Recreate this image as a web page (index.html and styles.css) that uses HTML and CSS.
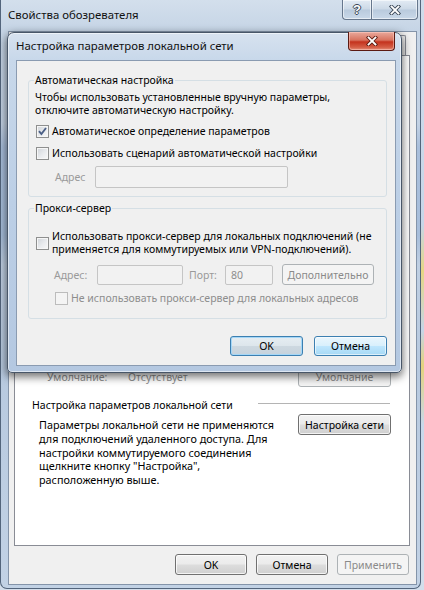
FILE: index.html
```html
<!DOCTYPE html>
<html lang="ru">
<head>
<meta charset="utf-8">
<title>Свойства обозревателя</title>
<link rel="stylesheet" href="styles.css">
</head>
<body>
<div class="main">
  <div class="titlebar">
    <span class="title">Свойства обозревателя</span>
    <div class="capbtns">
      <span class="cb help">?</span>
      <span class="cb close"><svg width="12" height="10" viewBox="0 0 12 10"><path d="M2.5 1.5 L9.5 8.5 M9.5 1.5 L2.5 8.5" stroke="#3a4656" stroke-width="3.6" stroke-linecap="square"/><path d="M2.5 1.5 L9.5 8.5 M9.5 1.5 L2.5 8.5" stroke="#fff" stroke-width="1.8" stroke-linecap="square"/></svg></span>
    </div>
  </div>
  <div class="client">
    <div class="tabs">
      <span class="tab"></span>
      <span class="tab"></span>
      <span class="tab"></span>
      <span class="tab"></span>
      <span class="tab"></span>
    </div>
    <div class="panel">
      <div class="default-row">
        <span class="k">Умолчание:</span>
        <span class="v">Отсутствует</span>
        <span class="btn dis wide">Умолчание</span>
      </div>
      <div class="sect-head">
        <span>Настройка параметров локальной сети</span>
        <span class="rule"></span>
      </div>
      <div class="lan-row">
        <p class="lan-text">Параметры локальной сети не применяются<br>для подключений удаленного доступа. Для<br>настройки коммутируемого соединения<br>щелкните кнопку "Настройка",<br>расположенную выше.</p>
        <span class="btn wide">Настройка сети</span>
      </div>
    </div>
    <div class="btnrow">
      <span class="btn">OK</span>
      <span class="btn">Отмена</span>
      <span class="btn dis">Применить</span>
    </div>
  </div>
</div>

<div class="dlg">
  <div class="dtitlebar">
    <span class="dtitle">Настройка параметров локальной сети</span>
    <span class="redclose"><svg width="12" height="10" viewBox="0 0 12 10"><path d="M2.5 1.5 L9.5 8.5 M9.5 1.5 L2.5 8.5" stroke="#5a1c12" stroke-width="3.6" stroke-linecap="square"/><path d="M2.5 1.5 L9.5 8.5 M9.5 1.5 L2.5 8.5" stroke="#fff" stroke-width="1.8" stroke-linecap="square"/></svg></span>
  </div>
  <div class="dclient">
    <fieldset class="grp g-auto">
      <legend>Автоматическая настройка</legend>
      <p class="hint">Чтобы использовать установленные вручную параметры,<br>отключите автоматическую настройку.</p>
      <div class="chk c1"><span class="box"><svg width="11" height="11" viewBox="0 0 11 11"><path d="M2 5.2 L4.4 8 L9 2" fill="none" stroke="#4b5f86" stroke-width="1.9"/></svg></span><span>Автоматическое определение параметров</span></div>
      <div class="chk c2"><span class="box"></span><span>Использовать сценарий автоматической настройки</span></div>
      <div class="addr-row"><span class="dis-t l-addr">Адрес</span><span class="edit e-script"></span></div>
    </fieldset>
    <fieldset class="grp g-proxy">
      <legend>Прокси-сервер</legend>
      <div class="chk two"><span class="box"></span><span>Использовать прокси-сервер для локальных подключений (не<br>применяется для коммутируемых или VPN-подключений).</span></div>
      <div class="proxy-row">
        <span class="dis-t l-paddr">Адрес:</span><span class="edit e-addr"></span>
        <span class="dis-t l-port">Порт:</span><span class="edit e-port">80</span>
        <span class="btn dis adv">Дополнительно</span>
      </div>
      <div class="chk c3 disabled"><span class="box"></span><span>Не использовать прокси-сервер для локальных адресов</span></div>
    </fieldset>
    <div class="dlg-btns">
      <span class="btn def">OK</span>
      <span class="btn hot">Отмена</span>
    </div>
  </div>
</div>
</body>
</html>
```

FILE: styles.css
```css
* { box-sizing: border-box; }
html, body { margin: 0; padding: 0; }
body {
  width: 424px;
  height: 590px;
  overflow: hidden;
  position: relative;
  font-family: "Noto Sans", "Open Sans", "DejaVu Sans", sans-serif;
  font-size: 10.5px;
  color: #000;
  background: linear-gradient(180deg, #cfdceb 0%, #c7d6e8 38%, #e6d684 46%, #c5d5e8 56%, #e4d27c 62%, #c9d8ea 72%, #d3deeb 100%);
}

/* ---------- main window ---------- */
.main {
  width: 421px;
  height: 589px;
  display: flex;
  flex-direction: column;
  background: linear-gradient(180deg, #d3dfec 0px, #c6d5e6 30px, #c3d2e4 21%, #a9bfdc 25%, #a7bedb 40%, #c0d0e3 45%, #b7c9df 62%, #c2d2e5 100%);
  border: 1px solid #53657c;
  border-top: none;
  border-radius: 0 0 7px 7px;
}
.titlebar {
  height: 31px;
  flex: none;
  display: flex;
  align-items: flex-start;
  padding-left: 7px;
}
.title {
  font-size: 11.4px;
  line-height: 14px;
  margin-top: 8px;
  color: #111;
}
.capbtns {
  margin-left: auto;
  margin-right: 2px;
  display: flex;
}
.cb {
  height: 20px;
  border: 1px solid #66778d;
  border-top: none;
  background: linear-gradient(180deg, #e3ebf4 0%, #ccd9e7 48%, #b9cadd 52%, #c9d8e9 100%);
  box-shadow: inset 0 0 0 1px rgba(255,255,255,.55);
  display: flex;
  align-items: center;
  justify-content: center;
}
.cb.help {
  width: 29px;
  border-right: none;
  border-radius: 0 0 0 4px;
  color: #fff;
  font-weight: bold;
  font-size: 13px;
  font-family: "Liberation Sans", sans-serif;
  text-shadow: 1px 0 0 #3a4656, -1px 0 0 #3a4656, 0 1px 0 #3a4656, 0 -1px 0 #3a4656;
}
.cb.close {
  width: 47px;
  border-radius: 0 0 4px 0;
}
.client {
  flex: 1;
  margin: 0 3px 3px 7px;
  background: #f0f0f0;
  border: 1px solid #8494a9;
  display: flex;
  flex-direction: column;
  padding: 3px 6px 0 5px;
}
.tabs {
  height: 20px;
  flex: none;
  display: flex;
  padding-right: 4px;
}
.tab {
  flex: 1;
  border: 1px solid #898c95;
  border-bottom: none;
  border-radius: 2px 2px 0 0;
  background: linear-gradient(#f3f3f3, #e3e3e3);
}
.panel {
  flex: 1;
  background: #fff;
  border: 1px solid #898c95;
  padding-top: 310px;
}
.default-row {
  display: flex;
  align-items: center;
  height: 21px;
  padding: 0 18px 0 32px;
  color: #8d8d8d;
}
.default-row .k { width: 81px; }
.default-row .btn { margin-left: auto; }
.sect-head {
  display: flex;
  align-items: center;
  height: 14px;
  line-height: 14px;
  margin-top: 11px;
  padding-left: 17px;
}
.sect-head .rule {
  width: 132px;
  height: 1px;
  background: #b4b4b4;
  margin-left: auto;
  margin-right: 19px;
  margin-top: -3px;
}
.lan-row {
  display: flex;
  align-items: flex-start;
  margin-top: 2px;
  padding: 0 18px 0 24px;
}
.lan-text {
  margin: 4px 0 0;
  line-height: 13.75px;
  font-size: 10.8px;
}
.lan-row .btn { margin-left: auto; }
.btnrow {
  display: flex;
  justify-content: flex-end;
  gap: 9px;
  padding: 8px 1px 9px 0;
}

/* ---------- buttons ---------- */
.btn {
  width: 72px;
  height: 21px;
  flex: none;
  display: flex;
  align-items: center;
  justify-content: center;
  border: 1px solid #707070;
  border-radius: 3px;
  background: linear-gradient(180deg, #f2f2f2 0%, #ebebeb 48%, #dddddd 52%, #cfcfcf 100%);
  box-shadow: inset 0 0 0 1px rgba(255,255,255,.75);
  white-space: nowrap;
  color: #000;
}
.btn.wide { width: 93px; }
.btn.dis {
  border-color: #adb2b5;
  background: #f4f4f4;
  box-shadow: none;
  color: #8a8a8a;
}
.btn.def {
  border-color: #3c7fb1;
  background: linear-gradient(180deg, #e6edf2 0%, #dde6ec 48%, #cdd8e0 52%, #c6d2dc 100%);
  box-shadow: inset 0 0 0 1px #a5d7f7;
}
.btn.hot {
  border-color: #3c7fb1;
  background: linear-gradient(180deg, #eaf6fd 0%, #d9f0fc 48%, #bee6fd 52%, #a7d9f5 100%);
  box-shadow: inset 0 0 0 1px rgba(255,255,255,.6);
}

/* ---------- dialog ---------- */
.dlg {
  position: absolute;
  left: 7px;
  top: 32px;
  width: 395px;
  height: 341px;
  border: 1px solid #485668;
  border-radius: 7px 7px 5px 5px;
  background: linear-gradient(180deg, #d7e2ef 0px, #c8d8ea 27px, #bccfe6 50%, #b4c8e1 100%);
  box-shadow: 0 3px 9px 1px rgba(0,0,0,.55), inset 0 0 0 1px rgba(255,255,255,.55);
  display: flex;
  flex-direction: column;
  padding: 0 5px 6px 8px;
}
.dtitlebar {
  height: 27px;
  flex: none;
  display: flex;
  align-items: flex-start;
}
.dtitle {
  font-size: 11.4px;
  line-height: 14px;
  margin-top: 6px;
  color: #111;
}
.redclose {
  margin-left: auto;
  margin-right: 1px;
  margin-top: -1px;
  width: 47px;
  height: 19px;
  border: 1px solid #5b1a12;
  border-top: none;
  border-radius: 0 0 4px 4px;
  background: linear-gradient(180deg, #e9a99c 0%, #d8735f 45%, #c4321d 55%, #d55e46 85%, #e3907c 100%);
  box-shadow: inset 0 0 0 1px rgba(255,210,200,.5);
  display: flex;
  align-items: center;
  justify-content: center;
}
.dclient {
  flex: 1;
  background: #f0f0f0;
  border: 1px solid #8a9bb1;
  display: flex;
  flex-direction: column;
  padding: 13px 8px 0 11px;
}
.grp {
  margin: 0;
  min-width: 0;
  border: 1px solid #d5dfe5;
  border-radius: 3px;
  padding: 4px 8px 8px 6px;
}
.grp legend {
  padding: 0 1px;
  margin-left: -1px;
  line-height: 13px;
}
.g-proxy { margin-top: 5px; padding-bottom: 13px; }
.hint {
  margin: 0;
  line-height: 12.5px;
  white-space: nowrap;
}
.chk {
  display: flex;
  align-items: center;
  gap: 3px;
  line-height: 13px;
  padding-left: 1px;
  white-space: nowrap;
}
.chk.c1 { margin-top: 9px; }
.chk.c2 { margin-top: 9px; }
.chk.two { margin-top: 11px; }
.chk.c3 { margin-top: 7px; padding-left: 20px; color: #8d8d8d; }
.box {
  width: 13px;
  height: 13px;
  flex: none;
  border: 1px solid #8e8f8f;
  background: linear-gradient(135deg, #cfd3d8 0%, #e9ebee 55%, #f8f8f8 100%);
  box-shadow: inset 0 0 0 1px #f6f6f6;
  display: flex;
}
.chk.disabled .box {
  border-color: #bcbcbc;
  background: #f4f4f4;
  box-shadow: none;
}
.addr-row {
  display: flex;
  align-items: center;
  margin-top: 6px;
  padding-left: 20px;
}
.dis-t { color: #9a9a9a; }
.l-addr { width: 40px; }
.edit {
  height: 22px;
  border: 1px solid #c5c5c5;
  border-radius: 2px;
  background: #f2f2f2;
  color: #8d8d8d;
  display: flex;
  align-items: center;
  padding-left: 5px;
}
.e-script { width: 193px; }
.proxy-row {
  display: flex;
  align-items: center;
  margin-top: 8px;
  padding-left: 19px;
}
.l-paddr { width: 43px; }
.e-addr { width: 86px; height: 20px; }
.l-port { width: 36px; margin-left: 6px; }
.e-port { width: 48px; height: 20px; }
.btn.adv { width: 92px; margin-left: 9px; }
.dlg-btns {
  display: flex;
  justify-content: flex-end;
  gap: 11px;
  margin-top: 17px;
}
.dlg-btns .btn { width: 73px; height: 20px; }
```
